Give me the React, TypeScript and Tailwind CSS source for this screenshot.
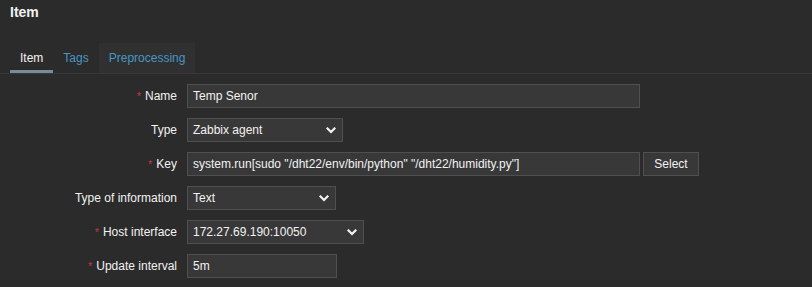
import React from 'react'

const Chevron = () => (
  <svg width="10" height="7" viewBox="0 0 10 7" fill="none">
    <path d="M1.5 1.5 L5 5 L8.5 1.5" stroke="#f2f2f2" strokeWidth="2.2" strokeLinecap="square" />
  </svg>
)

const Label = ({ text, required }: { text: string; required?: boolean }) => (
  <label className="w-[177px] shrink-0 text-right text-[#f2f2f2]">
    {required && <span className="text-[#c2393b] mr-[4px] text-[11px]">*</span>}
    {text}
  </label>
)

const TextInput = ({ value, width }: { value: string; width: string }) => (
  <div className={`${width} h-[24px] flex items-center px-[5px] bg-[#383838] border border-[#4f4f4f] text-[#f2f2f2]`}>
    {value}
  </div>
)

const Select = ({ value, width }: { value: string; width: string }) => (
  <div className={`${width} h-[24px] flex items-center justify-between pl-[5px] pr-[6px] bg-[#383838] border border-[#4f4f4f] text-[#f2f2f2]`}>
    <span>{value}</span>
    <Chevron />
  </div>
)

const App = () => {
  return (
    <div
      className="w-[812px] h-[287px] overflow-hidden bg-[#2b2b2b] text-[12px] text-[#f2f2f2]"
      style={{ fontFamily: '"Liberation Sans", Arial, sans-serif' }}
    >
      {/* Header */}
      <h1 className="pl-[10px] pt-[3px] text-[14px] leading-[18px] font-bold text-[#f2f2f2]">Item</h1>

      {/* Tabs */}
      <div className="mt-[22px] flex pl-[10px] border-b border-[#383838]">
        <div className="h-[30px] px-[10px] flex items-center border-b-[3px] border-[#768d99] pt-[3px] text-[#f2f2f2]">
          Item
        </div>
        <div className="h-[30px] px-[10px] flex items-center text-[#4796c4]">Tags</div>
        <div className="h-[30px] px-[10px] flex items-center bg-[#303030] text-[#4796c4]">Preprocessing</div>
      </div>

      {/* Form */}
      <div className="flex flex-col gap-[10px] pt-[10px]">
        <div className="flex items-center gap-[10px]">
          <Label text="Name" required />
          <TextInput value="Temp Senor" width="w-[453px]" />
        </div>
        <div className="flex items-center gap-[10px]">
          <Label text="Type" />
          <Select value="Zabbix agent" width="w-[156px]" />
        </div>
        <div className="flex items-center gap-[10px]">
          <Label text="Key" required />
          <div className="flex items-center gap-[3px]">
            <TextInput value={'system.run[sudo "/dht22/env/bin/python" "/dht22/humidity.py"]'} width="w-[453px]" />
            <button className="h-[24px] w-[56px] bg-[#383838] border border-[#4f4f4f] text-[#f2f2f2]">Select</button>
          </div>
        </div>
        <div className="flex items-center gap-[10px]">
          <Label text="Type of information" />
          <Select value="Text" width="w-[149px]" />
        </div>
        <div className="flex items-center gap-[10px]">
          <Label text="Host interface" required />
          <Select value="172.27.69.190:10050" width="w-[177px]" />
        </div>
        <div className="flex items-center gap-[10px]">
          <Label text="Update interval" required />
          <TextInput value="5m" width="w-[150px]" />
        </div>
      </div>
    </div>
  )
}

export default App
